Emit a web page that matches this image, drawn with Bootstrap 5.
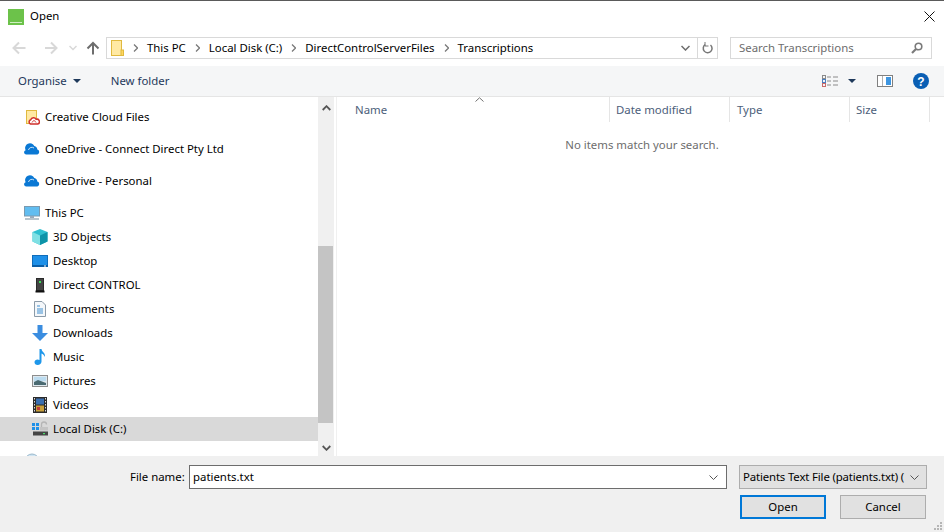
<!DOCTYPE html>
<html lang="en"><head><meta charset="utf-8"><title>Open</title>
<link rel="stylesheet" href="https://cdn.jsdelivr.net/npm/bootstrap@5.3.0/dist/css/bootstrap.min.css">
<style>
html,body{margin:0;height:532px;overflow:hidden;background:#fff}
body{font-family:"Noto Sans","Open Sans","Liberation Sans",sans-serif;font-size:11.4px;line-height:16px;color:#000}
svg{display:block;flex:none}
.dlg{width:944px;height:532px;border-top:1px solid #5a5a5a;overflow:hidden}
.titlebar{height:31px;padding-left:8px;gap:6px}
.titletext{margin-top:-2px}
.closex{margin-left:auto;margin-right:9px}
.navrow{height:34px;padding:5px 12px 0 12px}
.navbtns{width:94px;height:22px}
.addr{width:612px;height:22px;border:1px solid #d9d9d9;padding-left:4px}
.crumb{white-space:nowrap}
.sep{margin:0 9px 0 9px}
.addrend{margin-left:auto;height:20px}
.refresh{width:20px;height:20px;border-left:1px solid #d9d9d9;margin-left:7px}
.searchbox{width:202px;height:22px;border:1px solid #d9d9d9;margin-left:12px;padding:0 8px;color:#6d6d6d}
.toolbar{height:31px;background:#f5f6f7;border-bottom:1px solid #e5e5e5;color:#1e395b;padding-left:18px}
.orgcaret{margin-left:6px}
.newf{margin-left:30px}
.tools{margin-left:auto;margin-right:15px}
.mainpane{height:359px}
.sidepane{width:318px;overflow:hidden;padding-top:8px}
.navitem{height:24px;white-space:nowrap}
.lvl1{padding-left:24px;gap:5px}
.lvl2{padding-left:32px;gap:5px}
.spaced{margin-bottom:8px}
.navitem.sel{background:#d9d9d9}
.vscroll{width:16px;background:#f0f0f0}
.sbtn{height:17px}
.strack{height:132px}
.sthumb{height:177px;background:#c4c4c4;width:15px}
.sgap{height:16px}
.gutter{width:2px}
.divline{width:1px;background:#f0f0f0}
.filepane{flex:1;position:relative;min-width:0}
.sortmark{position:absolute;left:138px;top:0}
.colhead{height:25px;color:#4c607a}
.hname{width:273px;padding:5px 0 0 18px;border-right:1px solid #e5e5e5;height:25px}
.hcol{width:120px;padding:5px 0 0 6px;border-right:1px solid #e5e5e5;height:25px}
.hcol.htype{padding-left:7px}
.hsize{width:80px;padding:5px 0 0 6px;border-right:1px solid #e5e5e5;height:25px}
.noitems{color:#6d6d6d;text-align:center;width:610px;margin-top:15px}
.footerbar{height:76px;background:#f0f0f0;position:relative}
.frow1{padding-top:9px}
.flabel{margin-left:130px;width:59px;height:24px;line-height:24px}
.fname{width:538px;height:24px;background:#fff;border:1px solid #6d6d6d;padding:0 4px 0 3px}
.ftype{width:188px;height:24px;margin-left:12px;background:#e1e1e1;border:1px solid #adadad;padding:0 3px;white-space:nowrap}
.ftypetext{letter-spacing:-.15px}
.wbtn{width:86px;height:24px;background:#e1e1e1;border:1px solid #adadad;border-radius:0;padding:0;font-size:11.4px;line-height:16px;color:#000}
.frow2{padding:6px 0 0 740px}
.wbtn:hover{background:#e1e1e1;color:#000;border-color:#adadad}
.wbtn.prim,.wbtn.prim:hover{border:2px solid #0078d7}
.wbtn.second{margin-left:14px}
.grip{position:absolute;right:2px;bottom:2px}
</style></head><body>
<div class="dlg d-flex flex-column">
 <div class="titlebar d-flex align-items-center">
  <svg width="16" height="16"><rect width="16" height="16" fill="#6cc24a"/><rect x="2" y="13" width="12" height="1" fill="#cfeec2"/></svg>
  <span class="titletext">Open</span>
  <svg class="closex" width="11" height="11" viewBox="0 0 11 11"><path d="M.5.5l10 10M10.500.5l-10 10" stroke="#111" stroke-width="1" fill="none"/></svg>
 </div>
 <div class="navrow d-flex">
  <div class="navbtns d-flex align-items-center">
   <svg width="16" height="14" viewBox="0 0 16 14" class="me-3"><path d="M1.500 7h12M7 1.500L1.500 7 7 12.500" stroke="#d8d8d8" stroke-width="2" fill="none"/></svg>
   <svg width="14" height="14" viewBox="0 0 14 14"><path d="M1 7h11M7 1.500L12.500 7 7 12.500" stroke="#d8d8d8" stroke-width="2" fill="none"/></svg>
   <svg width="8" height="6" viewBox="0 0 8 6" style="margin-left:11px"><path d="M.5 1L4 4.500 7.500 1" stroke="#d8d8d8" stroke-width="1.500" fill="none"/></svg>
   <svg width="14" height="14" viewBox="0 0 14 14" style="margin-left:9px"><path d="M7 13.500V2M1.500 7.500L7 2l5.500 5.500" stroke="#6d6d6d" stroke-width="2" fill="none"/></svg>
  </div>
  <div class="addr d-flex align-items-center">
   <svg width="13" height="16" viewBox="0 0 13 16"><rect x=".5" y=".5" width="10" height="15" fill="#ffe9a3" stroke="#e0b93f"/><rect x="10" y="10" width="2.500" height="5.500" fill="#ffd75e" stroke="#e0b93f"/></svg>
   <svg class="sep" width="5" height="8" viewBox="0 0 5 8"><path d="M1 .5L4.500 4 1 7.500" stroke="#7a7a7a" stroke-width="1.300" fill="none"/></svg>
   <span class="crumb">This PC</span>
   <svg class="sep" width="5" height="8" viewBox="0 0 5 8"><path d="M1 .5L4.500 4 1 7.500" stroke="#7a7a7a" stroke-width="1.300" fill="none"/></svg>
   <span class="crumb">Local Disk (C:)</span>
   <svg class="sep" width="5" height="8" viewBox="0 0 5 8"><path d="M1 .5L4.500 4 1 7.500" stroke="#7a7a7a" stroke-width="1.300" fill="none"/></svg>
   <span class="crumb">DirectControlServerFiles</span>
   <svg class="sep" width="5" height="8" viewBox="0 0 5 8"><path d="M1 .5L4.500 4 1 7.500" stroke="#7a7a7a" stroke-width="1.300" fill="none"/></svg>
   <span class="crumb">Transcriptions</span>
   <div class="addrend d-flex align-items-center">
    <svg width="9" height="6" viewBox="0 0 9 6"><path d="M.5 1L4.500 5 8.500 1" stroke="#6d6d6d" stroke-width="1.500" fill="none"/></svg>
    <div class="refresh d-flex align-items-center justify-content-center">
     <svg width="11" height="12" viewBox="0 0 11 12"><path d="M3.200 2.700A4.400 4.400 0 1 0 8.500 3" stroke="#777" stroke-width="1.500" fill="none"/><path d="M3 0v4.500h3.500" stroke="#777" stroke-width="1" fill="none" transform="translate(0 -.5)"/></svg>
    </div>
   </div>
  </div>
  <div class="searchbox d-flex align-items-center justify-content-between">
   <span>Search Transcriptions</span>
   <svg width="12" height="12" viewBox="0 0 12 12"><circle cx="7.500" cy="4.500" r="3.300" stroke="#7a7a7a" stroke-width="1.600" fill="none"/><path d="M5 7L1 11" stroke="#7a7a7a" stroke-width="2.200"/></svg>
  </div>
 </div>
 <div class="toolbar d-flex align-items-center">
  <span>Organise</span>
  <svg class="orgcaret" width="8" height="4" viewBox="0 0 8 4"><path d="M0 0h8L4 4z" fill="#1e395b"/></svg>
  <span class="newf">New folder</span>
  <div class="tools d-flex align-items-center">
   <svg width="16" height="13" viewBox="0 0 16 13"><g fill="none" stroke="#8a8a8a"><rect x=".5" y=".5" width="3" height="3"/><rect x=".5" y="4.500" width="3" height="3" stroke="#4a7fc0"/><rect x=".5" y="8.500" width="3" height="3" stroke="#c86a6a"/></g><path d="M5 2h4M11 2h5M5 6h4M11 6h5M5 10h4M11 10h5" stroke="#8a8a8a"/></svg>
   <svg style="margin-left:10px" width="8" height="4" viewBox="0 0 8 4"><path d="M0 0h8L4 4z" fill="#1e395b"/></svg>
   <svg style="margin-left:21px" width="16" height="12" viewBox="0 0 16 12"><rect x=".5" y=".5" width="15" height="11" fill="#fff" stroke="#808080"/><rect x="9" y="2" width="5" height="8" fill="#3d95e0"/><path d="M5.500 1v10" stroke="#b0b0b0"/></svg>
   <svg style="margin-left:20px" width="16" height="16" viewBox="0 0 16 16"><circle cx="8" cy="8" r="8" fill="#0a5fb4"/><text x="8" y="12.500" text-anchor="middle" font-family="Liberation Sans" font-weight="700" font-size="12" fill="#fff">?</text></svg>
  </div>
 </div>
 <div class="mainpane d-flex">
  <nav class="sidepane">
   <div class="navitem spaced lvl1 d-flex align-items-center">
    <svg width="16" height="16" viewBox="0 0 16 16"><rect x="2.500" y="1.500" width="10" height="13" fill="#ffe9a3" stroke="#e0b93f"/><path d="M6.500 15a2.300 2.300 0 0 1 .2-4.300 3 3 0 0 1 5.500-.4 2.400 2.400 0 0 1 1.500 4.700z" fill="#fff" stroke="#d0312d" stroke-width="1.500"/><path d="M8 13.500c1.500-2.500 2.500-2.500 4 0" stroke="#d0312d" fill="none"/></svg>
    <span>Creative Cloud Files</span></div>
   <div class="navitem spaced lvl1 d-flex align-items-center">
    <svg width="16" height="16" viewBox="0 0 16 16"><path d="M2.200 13.500a2.200 2.200 0 0 1-.6-4.300A4.800 4.800 0 0 1 10.300 5a3.800 3.800 0 0 1 3 3.500A2.600 2.600 0 0 1 13.400 13.500z" fill="#0a78d4"/><path d="M4.500 9a3.500 3.500 0 0 1 5.500-2" stroke="#fff" stroke-width=".8" fill="none"/></svg>
    <span>OneDrive - Connect Direct Pty Ltd</span></div>
   <div class="navitem spaced lvl1 d-flex align-items-center">
    <svg width="16" height="16" viewBox="0 0 16 16"><path d="M2.200 13.500a2.200 2.200 0 0 1-.6-4.300A4.800 4.800 0 0 1 10.300 5a3.800 3.800 0 0 1 3 3.500A2.600 2.600 0 0 1 13.400 13.500z" fill="#0a78d4"/><path d="M4.500 9a3.500 3.500 0 0 1 5.500-2" stroke="#fff" stroke-width=".8" fill="none"/></svg>
    <span>OneDrive - Personal</span></div>
   <div class="navitem lvl1 d-flex align-items-center">
    <svg width="16" height="16" viewBox="0 0 16 16"><rect x=".5" y="1.500" width="15" height="9.500" fill="#62bdf0" stroke="#7a9ab0"/><rect x="6" y="11" width="4" height="2" fill="#9ab"/><rect x="1" y="13" width="14" height="2" fill="#b8c4cc"/></svg>
    <span>This PC</span></div>
   <div class="navitem lvl2 d-flex align-items-center">
    <svg width="16" height="16" viewBox="0 0 16 16"><path d="M8 0l7.500 3v9.500L8 16 .5 12.500V3z" fill="#2fc0d0"/><path d="M8 6.500V16l7.500-3.500V3z" fill="#0e93a8"/><path d="M.5 3L8 6.500V16L.5 12.500z" fill="#7fe0e4"/></svg>
    <span>3D Objects</span></div>
   <div class="navitem lvl2 d-flex align-items-center">
    <svg width="16" height="16" viewBox="0 0 16 16"><rect x=".5" y="2.500" width="15" height="10.500" fill="#1e90e8" stroke="#0f6dbb"/><rect y="12" width="16" height="2" fill="#0b5ea6"/><rect x="12" y="12.500" width="2" height="1" fill="#fff"/></svg>
    <span>Desktop</span></div>
   <div class="navitem lvl2 d-flex align-items-center">
    <svg width="16" height="16" viewBox="0 0 16 16"><rect x="4" y="1" width="8" height="14" fill="#2a2a2a"/><rect x="5" y="2" width="6" height="11" fill="#444"/><rect x="7" y="4" width="2" height="2" fill="#3ddc5a"/><rect x="3.500" y="13.500" width="9" height="2" fill="#111"/></svg>
    <span>Direct CONTROL</span></div>
   <div class="navitem lvl2 d-flex align-items-center">
    <svg width="16" height="16" viewBox="0 0 16 16"><path d="M2.500.5h7.500l3.500 3.500v11.500h-11z" fill="#f4f7fa" stroke="#8a9aa8"/><path d="M5 5h3M5 8h6M5 10h6M5 12h6" stroke="#3f8fd0"/></svg>
    <span>Documents</span></div>
   <div class="navitem lvl2 d-flex align-items-center">
    <svg width="16" height="16" viewBox="0 0 16 16"><path d="M5.500 0h5v8H16l-8 8-8-8h5.500z" fill="#3b8de0"/></svg>
    <span>Downloads</span></div>
   <div class="navitem lvl2 d-flex align-items-center">
    <svg width="16" height="16" viewBox="0 0 16 16"><path d="M7.500 0h2c.3 3 4 3.500 3.500 8-1-2-2-3-3.500-3.500v8c0 2-1.800 3.500-3.800 3.500S2.500 14.800 2.500 13.200s1.500-2.700 3-2.700c.7 0 1.400.2 2 .5z" fill="#1e97ea"/></svg>
    <span>Music</span></div>
   <div class="navitem lvl2 d-flex align-items-center">
    <svg width="16" height="16" viewBox="0 0 16 16"><rect x=".5" y="2.500" width="15" height="11" fill="#dfe9ef" stroke="#8d8d8d"/><rect x="2" y="4" width="12" height="4" fill="#bcdcf0"/><path d="M2 9l4-2 8 3v2H2z" fill="#4a6a72"/></svg>
    <span>Pictures</span></div>
   <div class="navitem lvl2 d-flex align-items-center">
    <svg width="16" height="16" viewBox="0 0 16 16"><rect x="1" y="0" width="14" height="16" fill="#2b2b2b"/><rect x="4" y="1.500" width="8" height="6" fill="#3a6fb0"/><rect x="4" y="8.500" width="8" height="6" fill="#c9a03a"/><rect x="5" y="10" width="3" height="3" fill="#c03a3a"/><path d="M2.500 1v14M13.500 1v14" stroke="#ddd" stroke-dasharray="1.500 1.500"/></svg>
    <span>Videos</span></div>
   <div class="navitem sel spaced lvl2 d-flex align-items-center">
    <svg width="16" height="16" viewBox="0 0 16 16"><g fill="#1e90e8"><rect x="0" y="2" width="3" height="3"/><rect x="4" y="2" width="3" height="3"/><rect x="0" y="6" width="3" height="3"/><rect x="4" y="6" width="3" height="3"/></g><path d="M9.500 7V3.500a2.500 2.500 0 0 1 5 0" stroke="#b5b5b5" stroke-width="1.300" fill="none"/><rect x="8" y="6" width="8" height="3.500" fill="#c4c4c4"/><rect x="1" y="10.500" width="15" height="4" fill="#444"/><rect x="11" y="12" width="2" height="1.200" fill="#4ddc6a"/></svg>
    <span>Local Disk (C:)</span></div>
   <div class="navitem lvl1 d-flex align-items-start">
    <svg class="mt-1" width="16" height="16" viewBox="0 0 16 16"><circle cx="8" cy="8" r="7" fill="#cfe4f2" stroke="#9ab8cc"/></svg>
   </div>
  </nav>
  <div class="vscroll d-flex flex-column">
   <div class="sbtn d-flex align-items-center justify-content-center pt-1"><svg width="9" height="6" viewBox="0 0 9 6"><path d="M.7 5L4.500 1.200 8.300 5" stroke="#555" stroke-width="1.800" fill="none"/></svg></div>
   <div class="strack"></div>
   <div class="sthumb"></div>
   <div class="sgap"></div>
   <div class="sbtn d-flex align-items-center justify-content-center"><svg width="9" height="6" viewBox="0 0 9 6"><path d="M.7 1L4.500 4.800 8.300 1" stroke="#555" stroke-width="1.800" fill="none"/></svg></div>
  </div>
  <div class="gutter"></div><div class="divline"></div>
  <div class="filepane">
   <svg class="sortmark" width="9" height="5" viewBox="0 0 9 5"><path d="M.5 4.500L4.500.8 8.500 4.500" stroke="#707070" fill="none"/></svg>
   <div class="colhead d-flex">
    <div class="hname">Name</div>
    <div class="hcol">Date modified</div>
    <div class="hcol htype">Type</div>
    <div class="hsize">Size</div>
   </div>
   <div class="noitems">No items match your search.</div>
  </div>
 </div>
 <div class="footerbar">
  <div class="frow1 d-flex">
   <label class="flabel">File name:</label>
   <div class="fname d-flex align-items-center justify-content-between">
    <span>patients.txt</span>
    <svg class="me-1" width="9" height="5" viewBox="0 0 9 5"><path d="M.5.5l4 4 4-4" stroke="#555" fill="none"/></svg>
   </div>
   <div class="ftype d-flex align-items-center justify-content-between">
    <span class="ftypetext">Patients Text File (patients.txt) (</span>
    <svg class="me-1" width="9" height="5" viewBox="0 0 9 5"><path d="M.5.5l4 4 4-4" stroke="#555" fill="none"/></svg>
   </div>
  </div>
  <div class="frow2 d-flex">
   <button type="button" class="btn wbtn prim">Open</button>
   <button type="button" class="btn wbtn second">Cancel</button>
  </div>
  <svg class="grip" width="8" height="8" viewBox="0 0 8 8"><g fill="#b5b5b5"><rect x="6" y="0" width="2" height="2"/><rect x="3" y="3" width="2" height="2"/><rect x="6" y="3" width="2" height="2"/><rect x="0" y="6" width="2" height="2"/><rect x="3" y="6" width="2" height="2"/><rect x="6" y="6" width="2" height="2"/></g></svg>
 </div>
</div>
</body></html>
